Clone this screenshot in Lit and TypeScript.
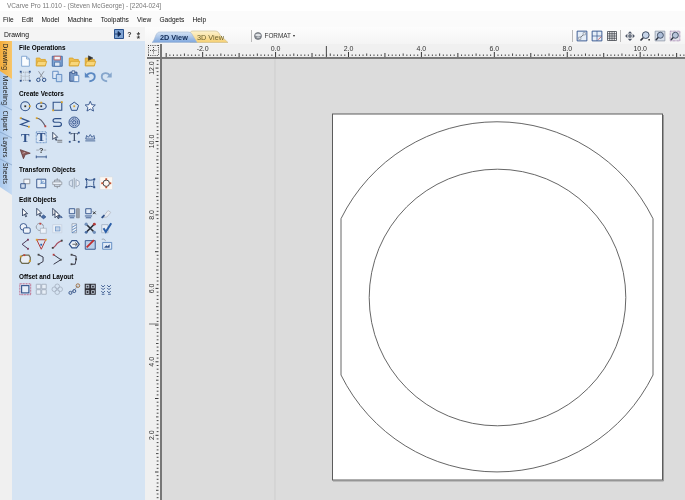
import { LitElement, html, css, svg } from "lit";
import { customElement } from "lit/decorators.js";
import { unsafeSVG } from "lit/directives/unsafe-svg.js";

const NAVY = "#2f5088", BLUE = "#5b87bf", YEL = "#f0bf4c", GR = "#8b9098", RED = "#c2413a";
const n = (x: number, y: number, c = "#dda52a") => `<rect x="${x - 1}" y="${y - 1}" width="2" height="2" fill="${c}" stroke="none"/>`;
const p = (d: string, s = NAVY, f = "none", w = 1) => `<path d="${d}" stroke="${s}" fill="${f}" stroke-width="${w}"/>`;
const folder = p("M2.5 13V4.5h4l1 1.5h5v7z", "#d8a432", YEL) + p("M2.5 13l1.5-5h10l-1.5 5z", "#d8a432", "#f8d77c");
const doc = (x: number, y: number, w = 7, h = 9, f = "#dfe9f6") => p(`M${x} ${y}h${w}v${h}h-${w}z`, BLUE, f);
const arrow = (x: number, y: number, f = "#fff") => p(`M${x} ${y}v8l2-2 1.5 3 1-.5-1.5-3h2.5z`, "#20304f", f, 0.9);
const ICONS: Record<string, string> = {
  new: p("M4 2.5h5.5l3 3v8h-8.5z", "#7ea3cf", "#fbfdff") + p("M9.5 2.5v3h3", "#7ea3cf"),
  open: folder,
  save: p("M2.5 2.5h11v11h-11z", "#3f6aa5", "#7fa4d2") + p("M4.5 2.5h7v4h-7z", "#c2413a", "#eef3fa", .8) + p("M5 9h6v4.5h-6z", "#3f6aa5", "#dfe8f3", .8),
  open2: folder,
  openArrow: folder + p("M6 2v5l5-2.5z", "#2a2a2a", "#333", .6),
  selAll: `<rect x="3.5" y="3.5" width="9" height="9" fill="none" stroke="${GR}" stroke-dasharray="1 1"/><path d="M3.5 6v6.5M8 3.5v9M3.5 8h9" stroke="#b5bcc6" stroke-width=".7"/>` + n(3, 3, NAVY) + n(13, 3, NAVY) + n(3, 13, NAVY) + n(13, 13, NAVY),
  cut: p("M11 2.5L6 10M5 2.5L10 10", GR) + `<circle cx="4.8" cy="12" r="1.9" fill="none" stroke="${NAVY}" stroke-width="1.1"/><circle cx="11.2" cy="12" r="1.9" fill="none" stroke="${NAVY}" stroke-width="1.1"/>`,
  copy: doc(3, 2.5, 6, 8) + doc(7, 6, 6, 8, "#c9dcf2"),
  paste: p("M3 3.5h8v10h-8z", NAVY, "#7d9cc8") + p("M5.5 2h3v3h-3z", NAVY, "#dfe6f0", .8) + doc(7.5, 7, 5.5, 7, "#eaf1fa"),
  undo: p("M4 7.5c2-4 9-4 9 1 0 3-3 5-6 5", "#5a88c2", "none", 2) + p("M2 3.5v6h5.5z", "none", "#5a88c2"),
  redo: p("M12 7.5c-2-4-9-4-9 1 0 3 3 5 6 5", "#86a6cc", "none", 2) + p("M14 3.5v6h-5.5z", "none", "#86a6cc"),
  circle: `<circle cx="8" cy="8" r="5" fill="none" stroke="${NAVY}" stroke-width="1.2"/>` + n(8, 8, "#333") + n(13, 8),
  ellipse: `<ellipse cx="8" cy="8" rx="5.5" ry="3.6" fill="none" stroke="${NAVY}" stroke-width="1.2"/>` + n(8, 8, "#333") + n(8, 4),
  rect: p("M3.5 3.5h9.5v9h-9.5z", NAVY, "none", 1.2) + n(3.5, 12.5) + n(13, 3.5),
  poly: p("M8 3.5l4.8 3.5-1.8 5.5h-6l-1.8-5.5z", NAVY, "none", 1.1) + n(8, 8, "#d8a432"),
  star: p("M8 2.5l1.6 3.8 4 .3-3 2.7 1 4-3.6-2.2-3.6 2.2 1-4-3-2.7 4-.3z", NAVY, "#f3f6fb", 1),
  polyline: p("M3 3.5l9 3.5-9 3.5 9 2.5", NAVY, "none", 1.3) + n(3, 3.5) + n(12, 13),
  curve: p("M3 3.5c4 0 7 4 9.5 9", "#5b5f72", "none", 1.2) + n(3, 3.5) + n(12.5, 12.5, RED),
  scurve: p("M12.5 4H6C2.5 4 2.5 8 6 8h4c3.5 0 3.5 4.5 0 4.5H3.5", NAVY, "none", 1.3),
  spiral: `<circle cx="8" cy="8" r="5.8" fill="#b6c6e2" stroke="${NAVY}"/><circle cx="8" cy="8" r="3.8" fill="none" stroke="${NAVY}" stroke-dasharray="2 1"/><circle cx="8" cy="8" r="1.8" fill="none" stroke="${NAVY}"/>`,
  T: `<text x="8" y="13" text-anchor="middle" class="gt">T</text>`,
  TBox: `<rect x="2.5" y="2" width="11" height="12" fill="#dce8f6" stroke="${BLUE}" stroke-dasharray="1 .6"/><text x="8" y="12.5" text-anchor="middle" class="gt">T</text>`,
  Tcurve: arrow(3, 2.5) + p("M8 11.5h5.5M8 13.5h5.5", GR, "none", 1.4),
  Tarrows: `<text x="8" y="12.5" text-anchor="middle" class="gt thin">T</text>` + n(3, 3, NAVY) + n(13, 3, NAVY) + n(3, 13, NAVY) + n(13, 13, NAVY),
  crown: p("M2.5 12h11M3 10l1-4 2 2 2-3 2 3 2-2 1 4z", NAVY, "#c8d6ea", .9),
  knife: p("M2.5 4l11 4-5.5 1.5-2 4.5z", "#5a3030", "#8b5a5a", .8) + p("M5 8l3-1", "#d8c4c4", "none", .8),
  dim: `<text x="8" y="8" text-anchor="middle" class="qm">?</text>` + p("M2.5 12h11M2.5 10.5v3M13.5 10.5v3", NAVY) + p("M2.5 4.5h3M10.5 4.5h3", GR, "none", .8),
  move: p("M6.5 3.5h6.5v5h-6.5z", GR, "#f3f6fb") + p("M3 8.5h5v5h-5z", NAVY, "#cfdcee") ,
  scale: p("M3 3.5h10v9.5h-10z", NAVY, "#e6eef8") + p("M8 8h5M8 8v-4.5M7 9l3.5-3.5", BLUE),
  align: p("M8 2.5v11", GR) + p("M5 4.5h6v7h-6z", GR, "#d6e2f1") + p("M3 6.5h10v3h-10z", GR, "#eaf0f8", .8),
  mirror: p("M8 2v12", GR, "none", .8) + p("M6 4l-3.5 2v4l3.5 2z", "#9aa8bc", "#dbe5f2") + p("M10 4l3.5 2v4l-3.5 2z", "#9aa8bc", "#f0f4fa"),
  distort: p("M3.5 3.5c3 1.5 6 1.5 9 0-1 3-1 6 0 9-3-1.5-6-1.5-9 0 1-3 1-6 0-9z", NAVY, "none", 1.1) + n(3.5, 3.5, NAVY) + n(12.5, 3.5, NAVY) + n(3.5, 12.5, NAVY) + n(12.5, 12.5, NAVY),
  target: `<rect x="1" y="1" width="14" height="14" fill="#fbf7f2" stroke="#d5d9df" stroke-width=".6"/><circle cx="8" cy="8" r="3.5" fill="none" stroke="#333"/>` + n(8, 3.5, "#c2502e") + n(8, 12.5, "#c2502e") + n(3.5, 8, "#c2502e") + n(12.5, 8, "#c2502e"),
  e1: arrow(5, 3),
  e2: arrow(3, 2.5) + p("M10.5 10l2.5 2-2.5 2-2.5-2z", NAVY, "#4a6ea5"),
  e3: arrow(3, 2.5) + p("M9.5 11l2 2M11.5 11l2 2", NAVY, "none", 1.2) + arrow(5.5, 5),
  e4: p("M2.5 3h6v5.5h-6z", NAVY, "#e3ebf6") + p("M2 11h7M3 13h5", NAVY) + p("M10.5 3h3v10h-3z", GR, "#9aa2ad"),
  e5: p("M3 3h6v5.5h-6z", NAVY, "#e3ebf6") + p("M2 11h8M3 13h6", NAVY) + p("M11 6l3 3M14 6l-3 3", "#333", "none", 1.1),
  e6: p("M3 13l3-3 4-5 3 2-4 5z", "#b8bec8", "#e8ecf2") + p("M3 13l3-3", NAVY, "none", 2),
  e7: `<circle cx="6" cy="6.5" r="3.7" fill="#eef3fa" stroke="${NAVY}"/><rect x="6" y="7.5" width="7.5" height="6" rx="1.5" fill="#eef3fa" stroke="${NAVY}"/>`,
  e8: `<circle cx="6.5" cy="6.5" r="4" fill="none" stroke="${GR}" stroke-dasharray="4 1"/><rect x="7" y="8" width="6.5" height="5.5" fill="#eef3fa" stroke="#b6c0cd"/>` + n(7, 3, RED),
  e9: p("M3 4h10v9h-10z", "#c8d3e2", "#e9f0f8") + `<rect x="6" y="6.5" width="5" height="4.5" fill="#c5d4e9" stroke="${BLUE}" stroke-width=".7"/>`,
  e10: p("M5.5 3h5v10h-5z", "#9ba6b6", "#eef3f9") + p("M5.5 7l5-3M5.5 10l5-3M5.5 13l5-3", BLUE),
  e11: p("M3 3l10 10M13 3L3 13", "#2a2f3a", "none", 1.8) + `<circle cx="3.5" cy="3.5" r="1.8" fill="#7190bb"/><circle cx="12.5" cy="12.5" r="1.8" fill="#7190bb"/><circle cx="12.5" cy="3.5" r="1.6" fill="#b23a3a"/><circle cx="3.5" cy="12.5" r="1.6" fill="#4a6ea5"/>`,
  e12: p("M3 4h7v9h-7z", "#a8b6c8", "#e6edf6") + p("M5 8l2.5 4 6-9.5", "#2b5fa8", "none", 2.2),
  f1: p("M11 3L4.5 8l6.5 5", "#4a3a5a", "none", 1.1) + n(11, 3, "#7a3a5a") + n(11, 13, "#7a3a5a"),
  f2: p("M3 3h10L8 13.5z", "#b33c3c", "none", 1.1) + n(3, 3, "#dda52a") + n(13, 3, "#dda52a") + n(8, 8.5, "#2b5fa8"),
  f3: p("M3 12c3-1 3-3 5-5s3-2 5-3", "#a54a5c", "none", 1.4) + n(3, 12, "#444") + n(13, 4, "#444"),
  f4: p("M2.5 8l3-4h5l3 4-3 4h-5z", NAVY, "#eef3fa", 1.3) + p("M6 8h5M9 6l2.5 2-2.5 2", "#333", "none", .8),
  f5: p("M2.5 4h11v9.5h-11z", NAVY, "#bcd0ea") + p("M4 11.5l8-8", "#c02e2e", "none", 2),
  f6: p("M3 2.5c3-1 4 1 4 2", GR, "none", .8) + p("M4 6h10v7.5h-10z", BLUE, "#e2ebf6") + p("M6 11.5l2-2 1.5 1 2-2v3z", NAVY, NAVY, .5),
  g1: p("M3 5l3-1.5h6l1.5 2.5v4l-2 2.5h-7l-2-2.5z", "#6d6a4f", "#e9eef5", 1.4) + n(3, 5) + n(13, 10) + n(7, 3.5, RED),
  g2: p("M5 3l5 2.5 0 5L5 13.5", "#3a3a4a", "none", 1.1) + n(5, 3, "#444") + n(5, 13.5, "#444"),
  g3: p("M4 3l8 5.5L4 13.5", "#3a3a4a", "none", 1.1) + n(4, 3, "#b33c3c") + n(12, 8.5, "#444"),
  g4: p("M5 3l5 1.5 0 4-1 5-4 0", "#3a3a4a", "none", 1.1) + n(5, 3, "#444") + n(10, 8, "#444") + n(5, 13.5, "#444"),
  o1: `<rect x="2" y="2" width="12" height="12" fill="none" stroke="#b8456a" stroke-dasharray="1 .7"/><rect x="4" y="4" width="8" height="8" fill="#e6eef8" stroke="${NAVY}" stroke-width="1.2"/>`,
  o2: p("M2.5 2.5h5v5h-5zM8.5 2.5h5v5h-5zM2.5 8.5h5v5h-5zM8.5 8.5h5v5h-5z", "#a4afbf", "#e7eef7"),
  o3: `<circle cx="8" cy="4.8" r="2.6" fill="none" stroke="#aab5c4"/><circle cx="4.8" cy="8" r="2.6" fill="none" stroke="#aab5c4"/><circle cx="11.2" cy="8" r="2.6" fill="none" stroke="#aab5c4"/><circle cx="8" cy="11.2" r="2.6" fill="none" stroke="#aab5c4"/>`,
  o4: p("M4 12l4-3 4-5", GR, "none", .8) + `<circle cx="3.8" cy="12" r="1.7" fill="none" stroke="${NAVY}"/><circle cx="8" cy="10" r="1.7" fill="none" stroke="${NAVY}"/><circle cx="12" cy="4" r="2" fill="none" stroke="#9a6a3a"/>`,
  o5: p("M2.5 2.5h5v5h-5zM8.5 2.5h5v5h-5zM2.5 8.5h5v5h-5zM8.5 8.5h5v5h-5z", "#2c2c33", "#c9d3e0", 1.2) + p("M4 4h2v2h-2zM10 4h2v2h-2zM4 10h2v2h-2zM10 10h2v2h-2z", "none", "#33343c"),
  o6: p("M2.5 3.5l2 2 2-2M2.5 6.5l2 2 2-2M9 3.5l2 2 2-2M9 6.5l2 2 2-2M2.5 10l2 2 2-2M9 10l2 2 2-2M3 13.5h3M10 13.5h3", NAVY, "none", 1),
  vpEdge: p("M1.5 1.5h13v13h-13z", "#2d4f8a", "#e6eef8", 1.2) + p("M4 11.5l8-7", "#555") + p("M3.5 9.5h3v3h-3zM9.5 3.5h3v3h-3z", "#5b6a80", "#fff", .7),
  vpSplit: p("M1.5 1.5h13v13h-13z", "#2d4f8a", "#e6eef8", 1.2) + p("M8 1.5v13M1.5 8h13", "#2d4f8a", "none", .9) + p("M9.5 13l4-4", RED),
  grid: p("M2 2h12v12H2zM5 2v12M8 2v12M11 2v12M2 5h12M2 8h12M2 11h12", "#3a3d45", "none", 1),
  pan: p("M8 1.5l3 3H5zM8 14.5l3-3H5zM1.5 8l3-3v6zM14.5 8l-3-3v6z", "none", "#4c5566") + `<circle cx="8" cy="8" r="2.6" fill="#6e7684"/>`,
  zoom1: `<circle cx="9" cy="6.8" r="4.5" fill="#c8d6ea" stroke="#3c4a60" stroke-width="1.3"/>` + p("M5.5 10.5L2 14", "#2d3340", "none", 2.2) + p("M12.5 13h2", "#222", "none", 1.8),
  zoom2: p("M1.5 1.5h13v13h-13z", "#8993a3", "#d6deea") + `<circle cx="8.5" cy="7" r="4" fill="#aebfd9" stroke="#3c4a60" stroke-width="1.2"/>` + p("M5.5 10L2.5 13.5", "#2d3340", "none", 2),
  zoom3: `<rect x="1.5" y="1.5" width="13" height="13" fill="#e3e0ea" stroke="#8a5f9a" stroke-dasharray="1 .8"/><circle cx="8.5" cy="7" r="4" fill="#b8c4da" stroke="#3c4a60" stroke-width="1.2"/>` + p("M5.5 10L2.5 13.5", "#2d3340", "none", 2),
  fmt: `<circle cx="8" cy="8" r="5.6" fill="#878c93" stroke="#60656c"/><path d="M3 6.5c3-3 7-3 10 0-1 3-8 3-10 0z" fill="#dfe2e5"/><path d="M6 10.5h5" stroke="#e9ebed"/>`,
};

const SECTIONS: [string, string[]][] = [
  ["File Operations", ["new", "open", "save", "open2", "openArrow", "", "selAll", "cut", "copy", "paste", "undo", "redo"]],
  ["Create Vectors", ["circle", "ellipse", "rect", "poly", "star", "", "polyline", "curve", "scurve", "spiral", "", "", "T", "TBox", "Tcurve", "Tarrows", "crown", "", "knife", "dim"]],
  ["Transform Objects", ["move", "scale", "align", "mirror", "distort", "target"]],
  ["Edit Objects", ["e1", "e2", "e3", "e4", "e5", "e6", "e7", "e8", "e9", "e10", "e11", "e12", "f1", "f2", "f3", "f4", "f5", "f6", "g1", "g2", "g3", "g4"]],
  ["Offset and Layout", ["o1", "o2", "o3", "o4", "o5", "o6"]],
];
const MENU = ["File", "Edit", "Model", "Machine", "Toolpaths", "View", "Gadgets", "Help"];
const icon = (name: string) => html`<svg class="ic" viewBox="0 0 16 16">${unsafeSVG(ICONS[name] || "")}</svg>`;

const XS = 36.6, X0 = 114; // 0.0 lies at x=274 on the page, the ruler starts at x=160
const YS = 36.72, Y0 = 449.7; // 0.0 lies at y=507.7 on the page, the ruler starts at y=58

function hTicks() {
  let d = "", d2 = "";
  for (let i = -32; i < 115; i++) {
    const x = +(X0 + (i * XS) / 10).toFixed(1);
    if (x < 1) continue;
    if (i % 10 === 0) d2 += `M${x} ${i % 20 === 0 ? 8 : 9}V13`;
    else if (i % 5 === 0) d += `M${x} 9.5V12`;
    else d += `M${x} 10.5V12`;
  }
  return { d, d2 };
}
function vTicks() {
  let d = "", d2 = "";
  for (let i = 0; i < 130; i++) {
    const y = +(Y0 - (i * YS) / 10).toFixed(1);
    if (y < 1 || y > 442) continue;
    if (i % 10 === 0) d2 += `M${i % 20 === 0 ? 8.5 : 8} ${y}H11.5`;
    else if (i % 5 === 0) d += `M9 ${y}H11.5`;
    else d += `M9.7 ${y}H11.5`;
  }
  return { d, d2 };
}

@customElement("app-root")
export class AppRoot extends LitElement {
  static styles = css`
    :host { display: block; width: 685px; height: 500px; overflow: hidden; background: #fff; font-family: "Liberation Sans", "Noto Sans", sans-serif; color: #111; filter: blur(.25px); }
    .title { height: 11px; padding-left: 7px; font-size: 6.5px; line-height: 11px; color: #777; white-space: nowrap; }
    .menu { height: 16px; display: flex; align-items: center; padding-left: 3px; font-size: 6.6px; background: #fbfbfb; }
    .menu span { margin-right: 8.2px; }
    .main { display: flex; height: 473px; }
    .side { width: 145px; display: flex; flex-direction: column; background: #f0f0f0; flex: none; }
    .sidehead { height: 14px; flex: none; display: flex; align-items: center; font-size: 6.8px; padding-left: 4px; background: #f4f4f4; }
    .sidehead b { font-weight: 400; flex: 1; }
    .sidehead i { font-style: normal; font-weight: 700; font-size: 7px; width: 9px; text-align: center; color: #333; }
    .sidehead svg { width: 10px; height: 10px; margin-right: 1px; }
    .sidehead .pad { width: 2px; }
    .sidebody { flex: 1; display: flex; min-height: 0; }
    .strip { width: 12px; flex: none; }
    .strip text { font: 6.7px "Noto Sans", sans-serif; fill: #222; }
    .panel { flex: 1; background: #d6e4f3; padding: 2px 0 0 7px; display: flex; flex-direction: column; gap: 4.6px; }
    h3 { margin: 0; height: 10px; line-height: 10px; font-size: 6.4px; font-weight: 700; color: #000; white-space: nowrap; }
    .grid { display: grid; grid-template-columns: repeat(6, 16.3px); grid-auto-rows: 15.5px; margin-left: -2.2px; }
    .cell { display: flex; align-items: center; justify-content: center; }
    .ic { width: 14.5px; height: 14.5px; display: block; overflow: visible; }
    .gt { font: 700 14px "Liberation Serif", serif; fill: #2f5088; stroke: none; }
    .gt.thin { font-weight: 400; fill: #3a4a66; }
    .qm { font: 700 8px "Liberation Sans", sans-serif; fill: #333; stroke: none; }
    .work { flex: 1; display: flex; flex-direction: column; min-width: 0; background: #f0f0f0; }
    .viewbar { height: 17px; flex: none; display: flex; align-items: center; background: linear-gradient(#fdfdfd, #f4f4f4); }
    .tabs { width: 85px; height: 17px; margin-left: 7px; flex: none; }
    .tabs text { font: 700 7.3px "Liberation Sans", sans-serif; }
    .sep { width: 1px; height: 12px; background: #b9b9b9; flex: none; }
    .sepA { margin-left: 14px; }
    .fmt { display: flex; align-items: center; margin-left: 1px; font-size: 6.4px; color: #333; gap: 1.5px; }
    .fmt .ic { width: 10px; height: 10px; }
    .caret { width: 0; height: 0; border: 1.5px solid transparent; border-top: 2px solid #222; margin-top: 2px; }
    .spacer { flex: 1; }
    .tools { display: flex; align-items: center; gap: 2.9px; padding-right: 4px; }
    .tools .ic { width: 12px; height: 12px; }
    .rowtop { display: flex; height: 15px; flex: none; }
    .corner { width: 15px; margin-left: 2px; flex: none; border-bottom: 2px solid #777; box-sizing: border-box; background: #f0f0f0; border-right: 2px solid #777; }
    .corner svg { display: block; width: 13px; height: 13px; }
    .hr { flex: 1; display: block; height: 15px; }
    .rowmain { flex: 1; display: flex; min-height: 0; }
    .vr { width: 15px; margin-left: 2px; flex: none; display: block; height: 442px; }
    .ruler text { font: 7px "Liberation Sans", sans-serif; fill: #333; }
    .canvas { flex: 1; display: block; height: 442px; min-width: 0; }
  `;

  render() {
    const h = hTicks(), v = vTicks();
    const hLabels = [-2, 0, 2, 4, 6, 8, 10];
    const vLabels = [2, 4, 6, 8, 10, 12];
    return html`
      <div class="title">VCarve Pro 11.010 - (Steven McGeorge) - [2204-024]</div>
      <div class="menu">${MENU.map((m) => html`<span>${m}</span>`)}</div>
      <div class="main">
        <div class="side">
          <div class="sidehead">
            <b>Drawing</b>
            <svg viewBox="0 0 10 10"><path d="M.5 .5h9v9h-9z" fill="#7ea3d2" stroke="#28508c"/><path d="M1 5h5M4 2.5L7 5 4 7.5z" stroke="#102a55" fill="#102a55" stroke-width=".8"/></svg>
            <i>?</i><i>⁑</i><span class="pad"></span>
          </div>
          <div class="sidebody">
            <svg class="strip" width="12" height="459" viewBox="0 0 12 459">
              <defs>
                <linearGradient id="tb" x1="0" x2="1" y1="0" y2="0"><stop offset="0" stop-color="#a9c8ec"/><stop offset="1" stop-color="#c6dbf3"/></linearGradient>
                <linearGradient id="to" x1="0" x2="1" y1="0" y2="0"><stop offset="0" stop-color="#f3ac3c"/><stop offset="1" stop-color="#f8c66a"/></linearGradient>
              </defs>
              <path d="M0 28L12 36V154L0 146z" fill="url(#tb)"/>
              <path d="M0 63l12 6M0 91l12 6M0 118l12 6" stroke="#7f9fc6" stroke-width=".7" fill="none"/>
              <path d="M0 0H12V38L0 30z" fill="url(#to)"/>
              <text transform="translate(2.6,2.5) rotate(90)">Drawing</text>
              <text transform="translate(2.6,34.5) rotate(90)">Modeling</text>
              <text transform="translate(2.6,69.5) rotate(90)">Clipart</text>
              <text transform="translate(2.6,96) rotate(90)">Layers</text>
              <text transform="translate(2.6,122) rotate(90)">Sheets</text>
            </svg>
            <div class="panel">
              ${SECTIONS.map(([t, items]) => html`<section>
                <h3>${t}</h3>
                <div class="grid">${items.map((i) => html`<div class="cell">${i ? icon(i) : ""}</div>`)}</div>
              </section>`)}
            </div>
          </div>
        </div>
        <div class="work">
          <div class="viewbar">
            <svg class="tabs" viewBox="0 0 85 17">
              <defs>
                <linearGradient id="t2" x1="0" x2="0" y1="0" y2="1"><stop offset="0" stop-color="#d5e3f5"/><stop offset="1" stop-color="#7ea6dc"/></linearGradient>
                <linearGradient id="t3" x1="0" x2="0" y1="0" y2="1"><stop offset="0" stop-color="#fdf3d0"/><stop offset="1" stop-color="#f5cf72"/></linearGradient>
              </defs>
              <path d="M38 15.5V7c0-2 1-3 3-3h22c3 0 4 2 5 4l8 7.5z" fill="url(#t3)" stroke="#c9b988" stroke-width=".6"/>
              <path d="M0 15.5C2 14 3 10 4 8c1-2 2-3 4-3h28c3 0 4 2 5 4l4 6.5z" fill="url(#t2)" stroke="#a3b8d4" stroke-width=".6"/>
              <text x="8" y="12.5" fill="#102a55">2D View</text>
              <text x="45" y="12.5" fill="#6c6230" style="font-weight:400">3D View</text>
            </svg>
            <span class="sep sepA"></span>
            <div class="fmt">${icon("fmt")}<span>FORMAT</span><span class="caret"></span></div>
            <div class="spacer"></div>
            <div class="tools">
              <span class="sep"></span>${icon("vpEdge")}${icon("vpSplit")}${icon("grid")}
              <span class="sep"></span>${icon("pan")}${icon("zoom1")}${icon("zoom2")}${icon("zoom3")}
            </div>
          </div>
          <div class="rowtop">
            <div class="corner">
              <svg viewBox="0 0 13 13"><path d="M1 1.5h11M1 11.5h11M1.5 1v11M11.5 1v11M6.5 3v7M3 6.5h7" stroke="#333" stroke-width=".9" stroke-dasharray="1 1.2" fill="none"/></svg>
            </div>
            <svg class="hr ruler" viewBox="0 0 525 15" width="525" height="15">
              <rect width="525" height="15" fill="#f0f0f0"/>
              <path d="${h.d}" stroke="#333" stroke-width=".9"/>
              <path d="${h.d2}" stroke="#222" stroke-width=".9"/>
              <path d="M165 2V13" stroke="#444" stroke-width="1"/>
              <rect y="13" width="525" height="2" fill="#777"/>
              ${hLabels.map((l) => svg`<text x="${X0 + l * XS}" y="7" text-anchor="middle">${l.toFixed(1)}</text>`)}
            </svg>
          </div>
          <div class="rowmain">
            <svg class="vr ruler" viewBox="0 0 15 442" width="15" height="442">
              <rect width="15" height="442" fill="#f0f0f0"/>
              <path d="${v.d}" stroke="#333" stroke-width=".9"/>
              <path d="${v.d2}" stroke="#222" stroke-width=".9"/>
              <path d="M2 265H11.5" stroke="#8a8a8a" stroke-width="1.2"/>
              <rect x="13" width="2" height="442" fill="#777"/>
              ${vLabels.map((l) => svg`<text transform="translate(7,${Y0 - l * YS}) rotate(-90)" text-anchor="middle">${l.toFixed(1)}</text>`)}
            </svg>
            <svg class="canvas" viewBox="162 58 523 442" width="523" height="442">
              <rect x="162" y="58" width="523" height="442" fill="#dcdcdc"/>
              <path d="M275 58V500" stroke="#cdcdcd" stroke-width="1"/>
              <rect x="332.5" y="113" width="330" height="366" fill="#fff" stroke="#5c5c5c" stroke-width="1"/>
              <path d="M663.5 114V480H333" fill="none" stroke="#8a8a8a" stroke-width=".8"/>
              <path d="M341 217.7A174 174 0 0 1 653 217.7V374A174 174 0 0 1 341 374Z" fill="none" stroke="#555" stroke-width=".9"/>
              <circle cx="497.5" cy="296.5" r="128.3" fill="none" stroke="#555" stroke-width=".9"/>
            </svg>
          </div>
        </div>
      </div>
    `;
  }
}
